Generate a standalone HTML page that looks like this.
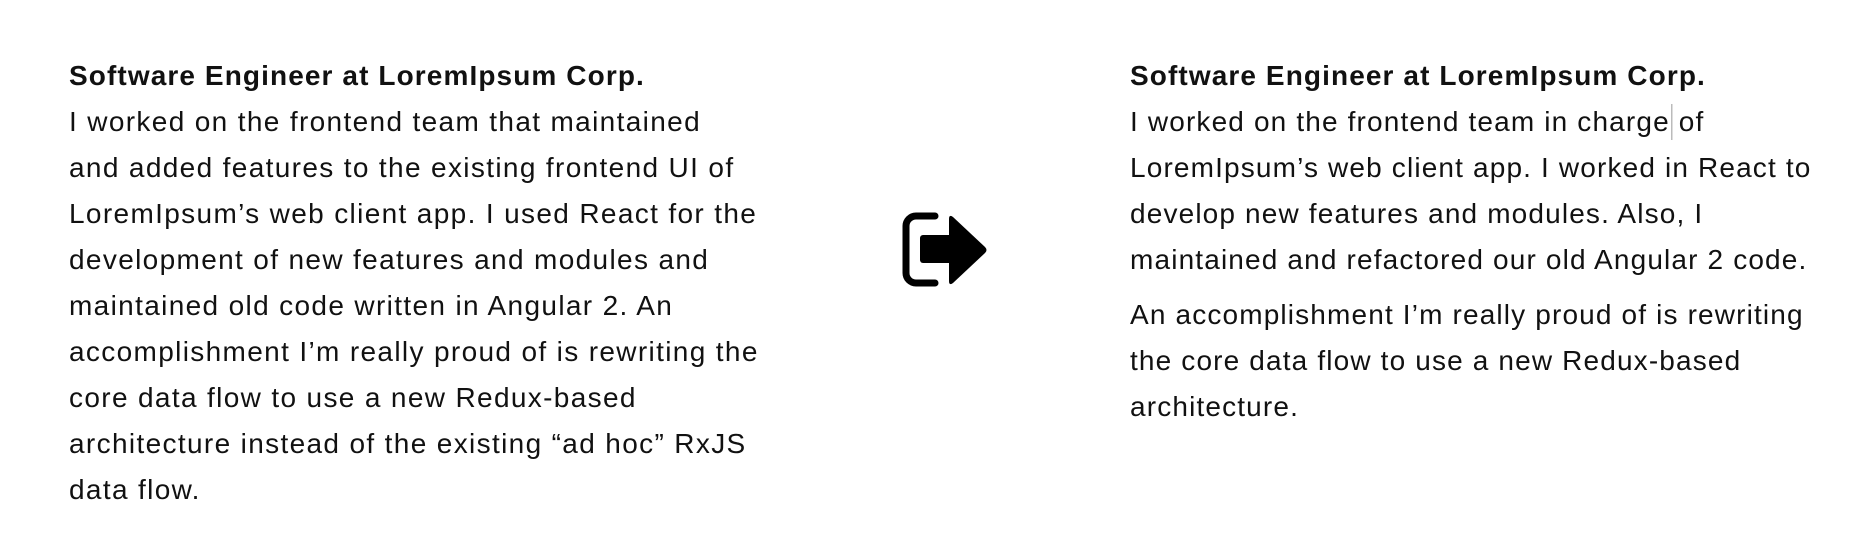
<!DOCTYPE html>
<html><head><meta charset="utf-8"><style>
html,body{margin:0;padding:0;background:#fff;width:1850px;height:533px;overflow:hidden}
.col{position:absolute;top:53px;font-family:"Liberation Sans",sans-serif;font-size:28px;line-height:46px;color:#111;white-space:nowrap;letter-spacing:1.35px}
.col b{display:block;letter-spacing:1.1px}
p{margin:0}
</style></head><body>
<div class="col" style="left:69px">
<b>Software Engineer at LoremIpsum Corp.</b>
<p>I worked on the frontend team that maintained<br>and added features to the existing frontend UI of<br>LoremIpsum’s web client app. I used React for the<br>development of new features and modules and<br>maintained old code written in Angular 2. An<br>accomplishment I’m really proud of is rewriting the<br>core data flow to use a new Redux-based<br>architecture instead of the existing “ad hoc” RxJS<br>data flow.</p>
</div>
<svg style="position:absolute;left:0;top:0" width="1850" height="533">
<path d="M935 216 H916 a10 10 0 0 0 -10 10 V273 a10 10 0 0 0 10 10 H935" fill="none" stroke="#000" stroke-width="7" stroke-linecap="round"/>
<rect x="920" y="235" width="32" height="28" rx="3" fill="#000"/>
<path d="M949 219 Q949 214 953 217 L985 247 Q988 250 985 253 L953 283 Q949 286 949 281 Z" fill="#000"/>
<rect x="1671" y="104" width="1.5" height="36" fill="#bbb"/>
</svg>
<div class="col" style="left:1130px;letter-spacing:1.15px">
<b>Software Engineer at LoremIpsum Corp.</b>
<p>I worked on the frontend team in charge of<br>LoremIpsum’s web client app. I worked in React to<br>develop new features and modules. Also, I<br>maintained and refactored our old Angular 2 code.</p>
<p style="margin-top:9px">An accomplishment I’m really proud of is rewriting<br>the core data flow to use a new Redux-based<br>architecture.</p>
</div>
</body></html>
